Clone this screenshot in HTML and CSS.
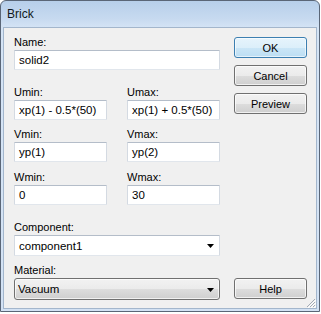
FILE: index.html
```html
<!DOCTYPE html>
<html>
<head>
<meta charset="utf-8">
<link rel="stylesheet" href="styles.css">
</head>
<body>
<div class="window">
  <div class="titlebar"><span class="title">Brick</span></div>
  <div class="client">
    <div class="form">
      <div class="field f-name">
        <div class="label">Name:</div>
        <div class="input">solid2</div>
      </div>
      <div class="pair f-u">
        <div class="field"><div class="label">Umin:</div><div class="input">xp(1) - 0.5*(50)</div></div>
        <div class="field"><div class="label">Umax:</div><div class="input">xp(1) + 0.5*(50)</div></div>
      </div>
      <div class="pair f-v">
        <div class="field"><div class="label">Vmin:</div><div class="input">yp(1)</div></div>
        <div class="field"><div class="label">Vmax:</div><div class="input">yp(2)</div></div>
      </div>
      <div class="pair f-w">
        <div class="field"><div class="label">Wmin:</div><div class="input">0</div></div>
        <div class="field"><div class="label">Wmax:</div><div class="input">30</div></div>
      </div>
      <div class="field f-comp">
        <div class="label">Component:</div>
        <div class="combo">
          <span>component1</span>
          <svg class="arrow" width="7" height="4" viewBox="0 0 7 4"><path d="M0 0H7L3.5 4Z" fill="#000"/></svg>
        </div>
      </div>
      <div class="field f-mat">
        <div class="label">Material:</div>
        <div class="combo combo-btn">
          <span>Vacuum</span>
          <svg class="arrow" width="7" height="4" viewBox="0 0 7 4"><path d="M0 0H7L3.5 4Z" fill="#000"/></svg>
        </div>
      </div>
    </div>
    <div class="buttons">
      <div class="btn btn-default">OK</div>
      <div class="btn">Cancel</div>
      <div class="btn">Preview</div>
      <div class="btn btn-help">Help</div>
    </div>
    <svg class="grip" width="10" height="10" viewBox="0 0 10 10">
      <path d="M9 1L1 9M9 4L4 9M9 7L7 9" stroke="#a3abb6" stroke-width="1" fill="none"/>
      <path d="M10 2L2 10M10 5L5 10M10 8L8 10" stroke="#ffffff" stroke-width="1" fill="none"/>
    </svg>
  </div>
</div>
</body>
</html>
```

FILE: styles.css
```css
html, body {
  margin: 0;
  padding: 0;
  background: #ffffff;
}

body {
  font-family: "Liberation Sans", Arial, sans-serif;
  font-size: 11px;
  color: #000;
}

.window {
  width: 320px;
  height: 312px;
  box-sizing: border-box;
  border: 1px solid #5a6677;
  border-radius: 6px 6px 0 0;
  background: linear-gradient(#b7cfea 0px, #c7daf0 18px, #d5e4f5 27px, #d3e2f4 100%);
  padding: 0 2px 2px;
  display: flex;
  flex-direction: column;
}

.titlebar {
  height: 26px;
  flex: none;
  display: flex;
  align-items: center;
  padding-left: 4px;
}

.title {
  font-size: 12px;
  color: #101820;
}

.client {
  flex: 1;
  position: relative;
  border: 1px solid #a3b6cc;
  background: #f0f0f0;
  display: flex;
  padding: 7px 9px 8px 10px;
}

.form {
  width: 206px;
  display: flex;
  flex-direction: column;
}

.field {
  display: flex;
  flex-direction: column;
}

.label {
  height: 14px;
  line-height: 14px;
  margin-bottom: 1px;
  white-space: nowrap;
}

.input {
  height: 20px;
  box-sizing: border-box;
  background: #fff;
  border: 1px solid;
  border-color: #b4bdc9 #d4dae2 #e1e6ec #d4dae2;
  border-radius: 1px;
  padding-left: 4px;
  line-height: 18px;
  font-size: 11.5px;
  white-space: nowrap;
  overflow: hidden;
}

.pair {
  display: grid;
  grid-template-columns: 93px 93px;
  column-gap: 20px;
}

.f-u { margin-top: 15px; }
.f-v { margin-top: 7px; }
.f-w { margin-top: 8px; }
.f-comp { margin-top: 15px; }
.f-mat { margin-top: 7px; }

.combo {
  height: 21px;
  box-sizing: border-box;
  background: #fff;
  border: 1px solid;
  border-color: #b4bdc9 #d4dae2 #e1e6ec #d4dae2;
  border-radius: 1px;
  padding: 0 5px 0 4px;
  font-size: 11.5px;
  display: flex;
  align-items: center;
  justify-content: space-between;
}

.combo-btn {
  height: 22px;
  border: 1px solid #707070;
  border-radius: 3px;
  background: linear-gradient(#f2f2f2 0%, #ebebeb 50%, #dddddd 51%, #cfcfcf 100%);
  box-shadow: inset 0 0 0 1px rgba(255, 255, 255, 0.7);
  padding-left: 3px;
}

.arrow {
  flex: none;
  margin-top: 1px;
}

.buttons {
  width: 73px;
  margin-left: 14px;
  display: flex;
  flex-direction: column;
  padding-top: 2px;
}

.btn {
  height: 21px;
  box-sizing: border-box;
  border: 1px solid #707070;
  border-radius: 3px;
  background: linear-gradient(#f2f2f2 0%, #ebebeb 50%, #dddddd 51%, #cfcfcf 100%);
  box-shadow: inset 0 0 0 1px rgba(255, 255, 255, 0.7);
  display: flex;
  align-items: center;
  justify-content: center;
  margin-bottom: 7px;
}

.btn-default {
  border-color: #3c7fb1;
  background: linear-gradient(#e6f4fc 0%, #dceffa 50%, #cbe6f7 51%, #bcdef3 100%);
  box-shadow: inset 0 0 0 1px rgba(255, 255, 255, 0.6);
}

.btn-help {
  margin-top: auto;
  margin-bottom: 1px;
}

.grip {
  position: absolute;
  right: 0;
  bottom: 0;
}
```
